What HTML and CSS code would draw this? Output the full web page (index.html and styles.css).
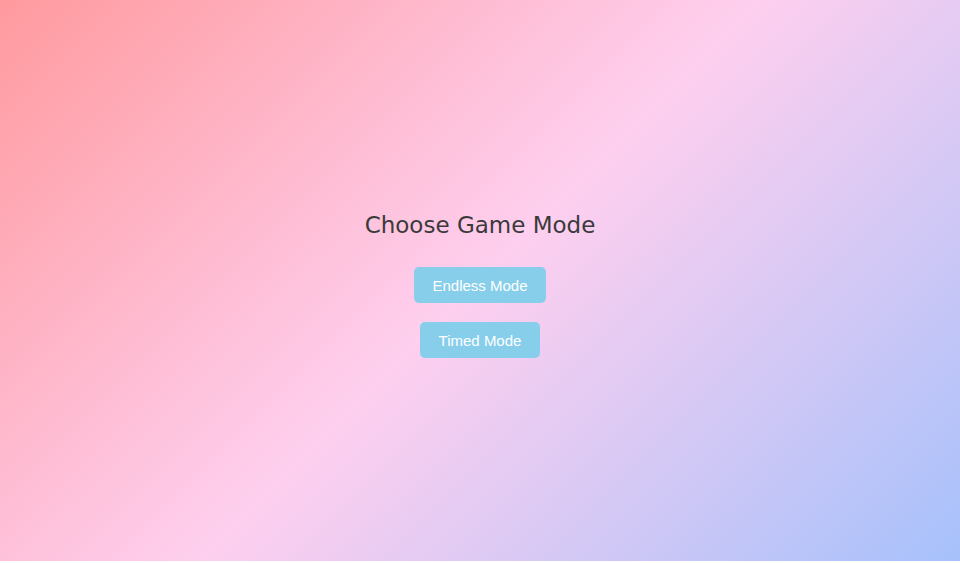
FILE: index.html
```html
<!DOCTYPE html>
<html>
<head>
<meta charset="utf-8">
<link rel="stylesheet" href="styles.css">
</head>
<body>
<div class="page">
  <div class="menu">
    <h1 class="title">Choose Game Mode</h1>
    <button class="mode-btn">Endless Mode</button>
    <button class="mode-btn">Timed Mode</button>
  </div>
</div>
</body>
</html>
```
FILE: styles.css
```css
html, body {
  margin: 0;
  padding: 0;
  background: #ffffff;
}
.page {
  height: calc(100vh - 2px);
  background: linear-gradient(135deg, #ff9a9e 0%, #fecfef 50%, #a6c1fb 100%);
  display: flex;
  align-items: center;
  justify-content: center;
}
.menu {
  display: flex;
  flex-direction: column;
  align-items: center;
  margin-top: 8px;
}
.title {
  font-family: "DejaVu Sans", sans-serif;
  font-weight: normal;
  font-size: 23px;
  color: #3a3a3a;
  margin: 0 0 28px 0;
  line-height: 28px;
}
.mode-btn {
  font-family: "Liberation Sans", Arial, sans-serif;
  font-size: 15px;
  color: #ffffff;
  background: #87ceeb;
  border: none;
  border-radius: 5px;
  padding: 0 18.5px;
  height: 36px;
  margin-bottom: 19px;
  cursor: pointer;
}
.mode-btn:last-child {
  margin-bottom: 0;
}
```
